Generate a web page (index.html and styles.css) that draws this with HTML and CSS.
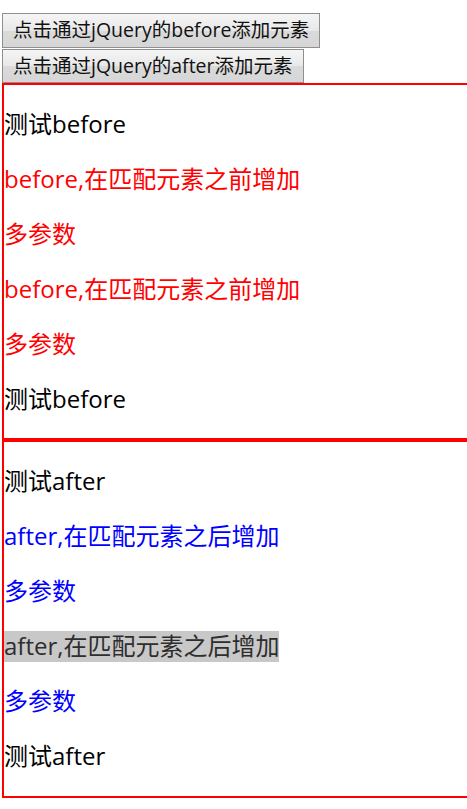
FILE: index.html
```html
<!DOCTYPE html>
<html lang="zh-CN">
<head>
<meta charset="utf-8">
<title>before / after</title>
<link rel="stylesheet" href="styles.css">
</head>
<body>
<div class="buttons">
  <button class="btn">点击通过jQuery的before添加元素</button>
  <button class="btn">点击通过jQuery的after添加元素</button>
</div>
<div class="box">
  <p class="txt">测试before</p>
  <p class="txt red">before,在匹配元素之前增加</p>
  <p class="txt red">多参数</p>
  <p class="txt red">before,在匹配元素之前增加</p>
  <p class="txt red">多参数</p>
  <p class="txt">测试before</p>
</div>
<div class="box">
  <p class="txt">测试after</p>
  <p class="txt blue">after,在匹配元素之后增加</p>
  <p class="txt blue">多参数</p>
  <p class="txt hl">after,在匹配元素之后增加</p>
  <p class="txt blue">多参数</p>
  <p class="txt">测试after</p>
</div>
</body>
</html>
```

FILE: styles.css
```css
html, body {
  margin: 0;
  padding: 0;
  background: #fff;
  overflow: hidden;
}
body {
  font-family: "Open Sans", "Noto Sans CJK SC", sans-serif;
  color: #000;
  padding-left: 2px;
}
.buttons {
  display: flex;
  flex-direction: column;
  align-items: flex-start;
  gap: 1px;
  padding-top: 13px;
}
.btn {
  font-family: "Open Sans", "Noto Sans CJK SC", sans-serif;
  font-size: 19.5px;
  line-height: 24px;
  height: 34.5px;
  padding: 0 10px;
  margin: 0;
  color: #111;
  border: 1px solid #8f8f8f;
  border-radius: 0;
  background: linear-gradient(#f5f5f5, #e8e8e8 50%, #dadada 51%, #d6d6d6);
}
.box {
  border: 2px solid #f00;
  border-right: 0;
}
.txt {
  margin: 24px 0;
  font-size: 24px;
  line-height: 30.9px;
  white-space: nowrap;
}
.red { color: #f00; }
.blue { color: #00f; }
.hl {
  width: fit-content;
  background: #c8c8c8;
  color: #2e2e2e;
}
```
